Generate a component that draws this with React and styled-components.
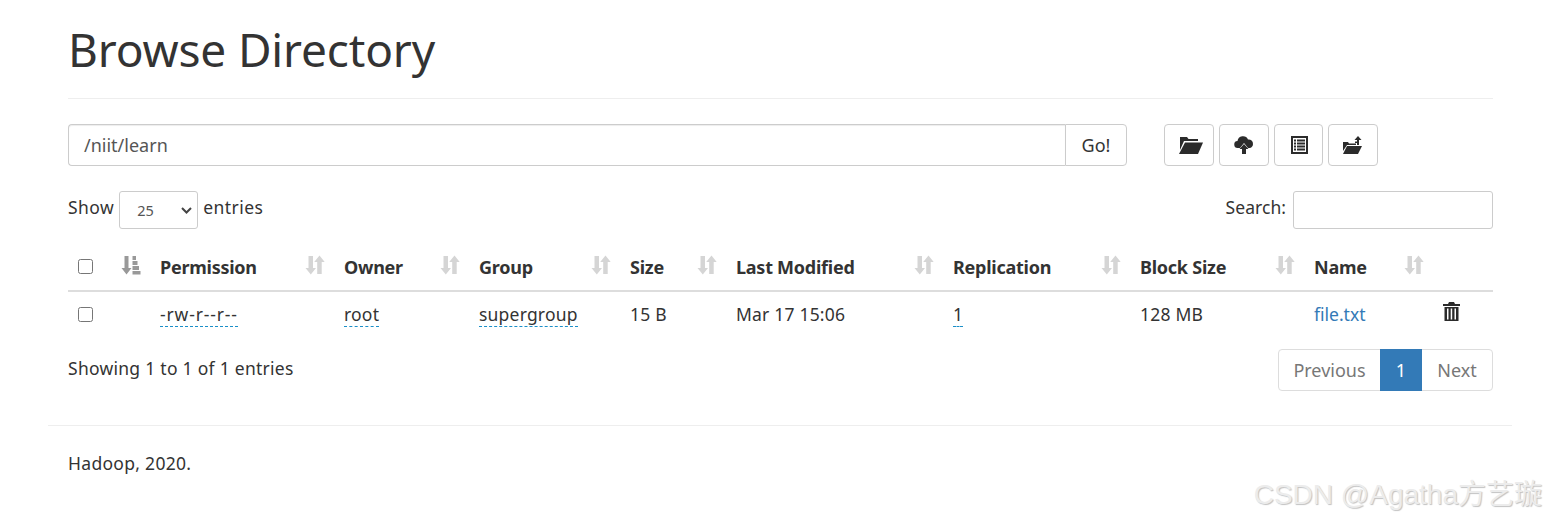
import React from "react";
import styled, { createGlobalStyle } from "styled-components";

const Global = createGlobalStyle`
  html, body { margin: 0; padding: 0; background: #fff; }
  body {
    font-family: "Noto Sans", "Noto Sans CJK SC", sans-serif;
    font-size: 18px;
    line-height: 1.43;
    color: #333;
  }
`;

const Page = styled.div`
  position: relative;
  width: 1546px;
  height: 522px;
  overflow: hidden;
`;
const Container = styled.div`
  width: 1464px;
  margin-left: 48px;
`;
const Inner = styled.div`
  padding: 0 19px 0 20px;
`;
const Header = styled.div`
  height: 98px;
  border-bottom: 1px solid #eee;
`;
const Title = styled.h1`
  margin: 0;
  padding-top: 17px;
  font-size: 46px;
  font-weight: 400;
  line-height: 64px;
  letter-spacing: -0.15px;
  color: #333;
`;
const Toolbar = styled.div`
  display: flex;
  margin-top: 25px;
  height: 42px;
`;
const PathGroup = styled.div`
  display: flex;
  width: 1059px;
`;
const PathInput = styled.div`
  flex: 1;
  border: 1px solid #ccc;
  border-right: none;
  border-radius: 4px 0 0 4px;
  padding: 0 15px;
  font-size: 18px;
  line-height: 41px;
  color: #555;
  box-shadow: inset 0 1px 1px rgba(0,0,0,.075);
`;
const GoButton = styled.div`
  width: 62px;
  box-sizing: border-box;
  border: 1px solid #ccc;
  border-radius: 0 4px 4px 0;
  text-align: center;
  line-height: 40px;
  font-size: 18px;
`;
const IconButtons = styled.div`
  display: flex;
  gap: 5px;
  margin-left: 37px;
`;
const IconButton = styled.div`
  width: ${(p) => p.$w || 50}px;
  height: 42px;
  box-sizing: border-box;
  border: 1px solid #ccc;
  border-radius: 4px;
  padding-left: ${(p) => p.$shift || 0}px;
  display: flex;
  align-items: center;
  justify-content: center;
`;
const Controls = styled.div`
  display: flex;
  justify-content: space-between;
  align-items: center;
  margin-top: 25px;
  height: 38px;
`;
const Label = styled.div`
  display: flex;
  align-items: center;
  gap: 5px;
  font-size: 17.5px;
  letter-spacing: ${(p) => p.$spacing}px;
  position: relative;
  top: -2px;
`;
const SelectBox = styled.div`
  position: relative;
  top: 2px;
  width: 79px;
  height: 38px;
  box-sizing: border-box;
  border: 1px solid #ccc;
  border-radius: 3px;
  font-size: 14.5px;
  letter-spacing: 0;
  line-height: 37px;
  padding-left: 17px;
  color: #555;
  display: flex;
  justify-content: space-between;
  align-items: center;
`;
const CaretWrap = styled.span`
  padding-right: 5px;
  line-height: 0;
`;
const SearchInput = styled.div`
  position: relative;
  top: 2px;
  width: 200px;
  height: 38px;
  box-sizing: border-box;
  border: 1px solid #ccc;
  border-radius: 3px;
  margin-left: 2px;
`;
const Table = styled.table`
  border-collapse: separate;
  border-spacing: 0;
  table-layout: fixed;
  width: 1425px;
  margin-top: 16px;
`;
const Th = styled.th`
  position: relative;
  height: 47px;
  padding: 0 10px;
  text-align: left;
  font-size: 18px;
  font-weight: 700;
  letter-spacing: -0.25px;
  border-bottom: 2px solid #ddd;
  box-sizing: border-box;
  color: #333;
  vertical-align: middle;
`;
const Td = styled.td`
  height: 46px;
  padding: 0 10px;
  font-size: 17.5px;
  letter-spacing: 0.2px;
  color: #333;
  box-sizing: border-box;
  vertical-align: middle;
`;
const Check = styled.span`
  display: block;
  position: relative;
  top: -1px;
  width: 13px;
  height: 13px;
  border: 1px solid #767676;
  border-radius: 2.5px;
  background: #fff;
`;
const SortSlot = styled.span`
  position: absolute;
  right: 9px;
  top: 10px;
  line-height: 0;
`;
const Abbr = styled.span`
  border-bottom: 1px dashed #1a8fc8;
  padding-bottom: 1px;
  display: inline-block;
  line-height: 22px;
  letter-spacing: ${(p) => p.$spacing || 0.2}px;
`;
const FileLink = styled.span`
  color: #337ab7;
  letter-spacing: 0;
`;
const Footer = styled.div`
  display: flex;
  justify-content: space-between;
  margin-top: 11px;
`;
const Info = styled.div`
  font-size: 17.5px;
  letter-spacing: 0.27px;
  line-height: 26px;
  padding-top: 6px;
`;
const Pagination = styled.div`
  display: flex;
  height: 42px;
  font-size: 18px;
  line-height: 40px;
`;
const PageItem = styled.div`
  box-sizing: border-box;
  width: ${(p) => p.$w}px;
  text-align: center;
  color: ${(p) => (p.$active ? "#fff" : "#777")};
  background: ${(p) => (p.$active ? "#337ab7" : "#fff")};
  border: 1px solid ${(p) => (p.$active ? "#337ab7" : "#ddd")};
  margin-left: ${(p) => (p.$first ? 0 : -1)}px;
  border-radius: ${(p) => p.$radius || 0};
  position: relative;
  z-index: ${(p) => (p.$active ? 2 : 1)};
`;
const FooterRule = styled.div`
  margin-top: 34px;
  border-top: 1px solid #eee;
`;
const Copyright = styled.div`
  padding: 24px 20px 0;
  font-size: 17.5px;
  letter-spacing: 0.3px;
  line-height: 26px;
`;
const Watermark = styled.div`
  position: absolute;
  right: 4px;
  top: 475px;
  font-family: "Liberation Sans", "Noto Sans CJK SC", sans-serif;
  font-size: 28px;
  line-height: 40px;
  color: #ececec;
  text-shadow: 1px 1px 1px #c2c2c2;
  white-space: nowrap;
`;

const Sort = () => (
  <svg width="20" height="20" viewBox="0 0 20 20" fill="#d5d5d5">
    <path d="M3.500 1h4.500v12h3l-5.200 6.500L.5 13h3z" />
    <path d="M14.500 .5l5.200 6.500h-3v12h-4.500V7h-3z" />
  </svg>
);
const SortAsc = () => (
  <svg width="20" height="20" viewBox="0 0 20 20" fill="#999">
    <path d="M3.500 1h4v12h3l-5 6.500-5-6.500h3z" />
    <path d="M11.500 1h3.500v4h-3.500zM11.500 6h5v4h-5zM11.500 11h6.500v4h-6.500zM11.500 16h8v3.500h-8z" />
  </svg>
);
const Caret = () => (
  <svg width="11" height="7" viewBox="0 0 11 7" fill="none" stroke="#444" strokeWidth="2">
    <path d="M1 1l4.500 4.500L10 1" />
  </svg>
);
const FolderOpen = () => (
  <svg width="24" height="20" viewBox="0 0 24 20" fill="#2b2b2b">
    <path d="M1 2h7l1.500 2H19v2H5L1 15z" />
    <path d="M6 7.500h18L19 19H0z" />
  </svg>
);
const CloudUp = () => (
  <svg width="20" height="20" viewBox="0 0 20 20" fill="#2b2b2b">
    <path d="M4 13a3.500 3.500 0 0 1 -.5-7A5.500 5.500 0 0 1 14 4.500 4.300 4.300 0 0 1 19 9c0 2-1.200 3.500-3 4h-2l-4-5-4 5z" />
    <path d="M10 9l4.500 5H12v5H8v-5H5.500z" />
  </svg>
);
const ListAlt = () => (
  <svg width="17" height="18" viewBox="0 0 17 18">
    <path fill="#2b2b2b" fillRule="evenodd" d="M0 0h17v18H0zM2 2v14h13V2z" />
    <path fill="#2b2b2b" d="M3 3.500h2v2H3zM6 3.500h8v2H6zM3 6.500h2v2H3zM6 6.500h8v2H6zM3 9.500h2v2H3zM6 9.500h8v2H6zM3 12.500h2v2H3zM6 12.500h8v2H6z" />
  </svg>
);
const FolderUp = () => (
  <svg width="20" height="19" viewBox="0 0 20 19" fill="#2b2b2b">
    <path d="M0 6h5l1 1.500h7V9H4l-4 6z" />
    <path d="M4 10h15l-4 8H0z" />
    <path d="M15 0l3.500 4H16v5h-2V7h-2V5.500h2V4h-2.500z" />
  </svg>
);
const Trash = () => (
  <svg width="17" height="19" viewBox="0 0 17 19" fill="#2b2b2b">
    <path d="M6 0h5l1 2h5v2H0V2h5z" />
    <path fillRule="evenodd" d="M1.500 5h14v14h-14zM4 6.500v11h1.500v-11zM7.700 6.500v11h1.500v-11zM11.500 6.500v11H13v-11z" />
  </svg>
);

const cols = [44, 38, 184, 135, 151, 106, 217, 187, 174, 129, 60];
const headers = ["Permission", "Owner", "Group", "Size", "Last Modified", "Replication", "Block Size", "Name"];

export default function App() {
  return (
    <Page>
      <Global />
      <Container>
        <Inner>
          <Header>
            <Title>Browse Directory</Title>
          </Header>
          <Toolbar>
            <PathGroup>
              <PathInput>/niit/learn</PathInput>
              <GoButton>Go!</GoButton>
            </PathGroup>
            <IconButtons>
              <IconButton $shift={3}><FolderOpen /></IconButton>
              <IconButton><CloudUp /></IconButton>
              <IconButton $w={49} $shift={2}><ListAlt /></IconButton>
              <IconButton><FolderUp /></IconButton>
            </IconButtons>
          </Toolbar>
          <Controls>
            <Label $spacing={0.45}>
              Show
              <SelectBox>25<CaretWrap><Caret /></CaretWrap></SelectBox>
              entries
            </Label>
            <Label $spacing={0.05}>
              Search:
              <SearchInput />
            </Label>
          </Controls>
          <Table>
            <colgroup>
              {cols.map((w, i) => <col key={i} width={w} />)}
            </colgroup>
            <thead>
              <tr>
                <Th><Check /></Th>
                <Th><SortSlot><SortAsc /></SortSlot></Th>
                {headers.map((h) => (
                  <Th key={h}>{h}<SortSlot><Sort /></SortSlot></Th>
                ))}
                <Th />
              </tr>
            </thead>
            <tbody>
              <tr>
                <Td><Check /></Td>
                <Td />
                <Td><Abbr $spacing={0.85}>-rw-r--r--</Abbr></Td>
                <Td><Abbr>root</Abbr></Td>
                <Td><Abbr>supergroup</Abbr></Td>
                <Td>15 B</Td>
                <Td>Mar 17 15:06</Td>
                <Td><Abbr>1</Abbr></Td>
                <Td>128 MB</Td>
                <Td><FileLink>file.txt</FileLink></Td>
                <Td><Trash /></Td>
              </tr>
            </tbody>
          </Table>
          <Footer>
            <Info>Showing 1 to 1 of 1 entries</Info>
            <Pagination>
              <PageItem $first $w={103} $radius="4px 0 0 4px">Previous</PageItem>
              <PageItem $active $w={42}>1</PageItem>
              <PageItem $w={72} $radius="0 4px 4px 0">Next</PageItem>
            </Pagination>
          </Footer>
        </Inner>
        <FooterRule />
        <Copyright>Hadoop, 2020.</Copyright>
      </Container>
      <Watermark>CSDN @Agatha方艺璇</Watermark>
    </Page>
  );
}
